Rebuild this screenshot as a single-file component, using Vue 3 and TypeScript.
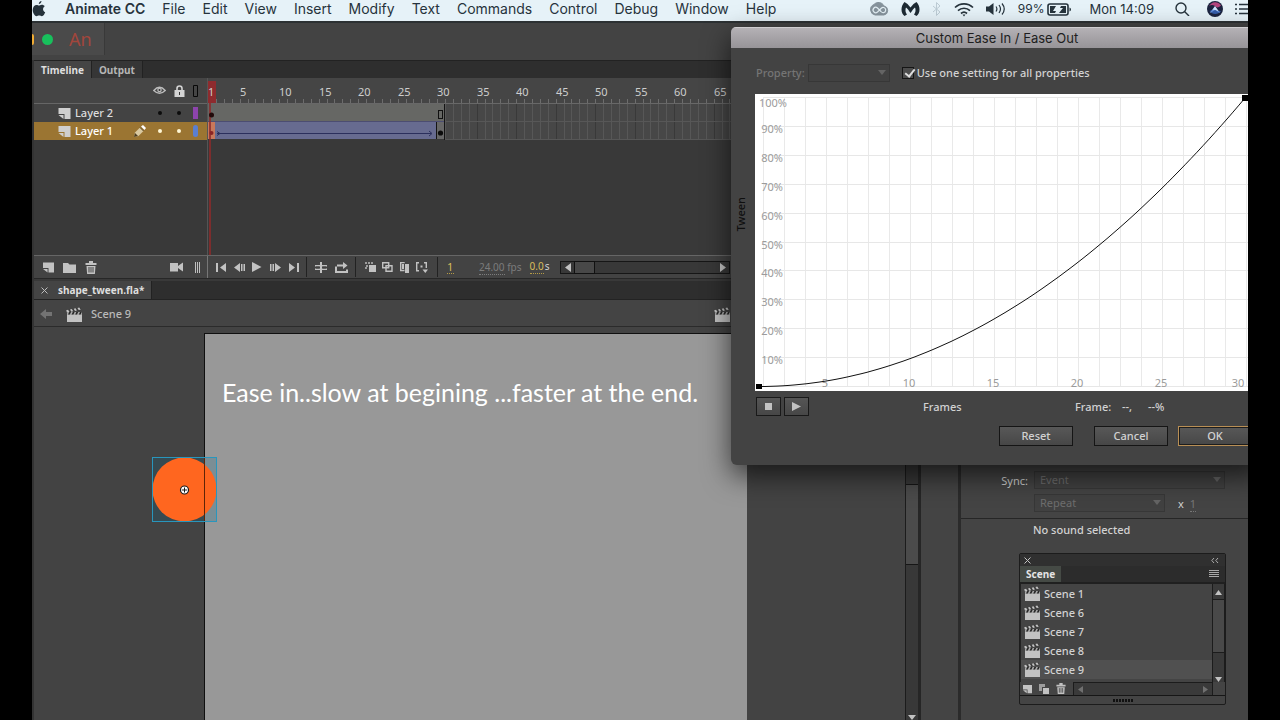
<script setup lang="ts">
import { computed, ref } from 'vue'

interface Layer {
  name: string
  color: string
  active: boolean
}

const menus = ['File', 'Edit', 'View', 'Insert', 'Modify', 'Text', 'Commands', 'Control', 'Debug', 'Window', 'Help']

const layers: Layer[] = [
  { name: 'Layer 2', color: '#8d44ad', active: false },
  { name: 'Layer 1', color: '#5b7fd0', active: true },
]

const scenes = ['Scene 1', 'Scene 6', 'Scene 7', 'Scene 8', 'Scene 9']
const currentScene = ref('Scene 9')
const oneSetting = ref(true)

const framePitch = 7.9
const totalFrames = 90
const lastLabel = 65
const frameX = (n: number) => Math.round((n - 1) * framePitch)
const ticks = computed(() => Array.from({ length: totalFrames }, (_, i) => frameX(i + 1)))
const rulerLabels = computed(() =>
  Array.from({ length: lastLabel / 5 }, (_, i) => (i + 1) * 5).map((n) => ({ n, x: frameX(n) })),
)
const emptyFrames = computed(() =>
  Array.from({ length: totalFrames - 30 }, (_, i) => i + 31).map((n) => ({ n, x: frameX(n) })),
)

const columns = Array.from({ length: 24 }, (_, i) => 8 + i * 21)
const rows = Array.from({ length: 11 }, (_, i) => Math.round(3 + i * 28.9))
const percents = Array.from({ length: 10 }, (_, i) => 100 - i * 10)
const frameMarks = [5, 10, 15, 20, 25, 30].map((n) => ({ n, x: n === 30 ? 483 : 70 + (n / 5 - 1) * 84 }))

// Quadratic ease-in sampled from the first frame to the last
const easeCurve = computed(() =>
  Array.from({ length: 82 }, (_, i) => i / 81)
    .map((t) => `${(4 + 486 * t).toFixed(1)},${(292.5 - 288.5 * t * t).toFixed(1)}`)
    .join(' '),
)
</script>

<template>
  <div class="screen">
    <svg class="defs" width="0" height="0" aria-hidden="true">
      <symbol id="clapper" viewBox="0 0 16 15">
        <path d="M1 8h15v7H1z" />
        <path d="M1 5h15v3H1z" opacity=".8" />
        <path d="M3.200 5h1.800L3.800 7.600H2zM6.800 5h1.800L7.400 7.600H5.600zM10.400 5h1.800L11 7.600H9.200zM14 5h1.800l-1.200 2.600h-1.800z" fill="#262626" />
        <path d="M0 3.200L14.500.2l.6 2.800L.7 5.600z" fill="#3a3a3a" />
        <path d="M.2 3.300l1.900-.5 1.400 2.200-2.600.5zM4 2.500l1.900-.4 1.300 2.200-1.900.4zM7.700 1.700l1.900-.4 1.300 2.200-1.900.4zM11.400.9l1.900-.4 1.500 2.200-2.100.4z" />
      </symbol>
      <symbol id="page" viewBox="0 0 12 11">
        <path d="M0 0h12v11H6V6H0z" />
        <path d="M0 7h5v4z" />
      </symbol>
      <symbol id="trash" viewBox="0 0 12 13">
        <path d="M4 0h4v2h3.500v2H.5V2H4zM1.500 5h9l-.6 8H2.100z" />
        <path d="M4 6v5.500M6 6v5.500M8 6v5.500" stroke="#444" />
      </symbol>
    </svg>

    <div class="desktop">
      <header class="menubar">
        <nav class="menus" aria-label="Application menu">
          <svg class="apple" width="14" height="17" viewBox="0 0 14 17"><path d="M9.500 0c.1 1.500-1.200 3-2.700 3C6.700 1.500 8 .2 9.500 0zM6.900 4.500c.7 0 1.600-.9 3-.8 1 0 2.100.5 2.800 1.500-2.400 1.500-2 5 .5 6-.6 1.700-1.900 4-3.300 4-1 0-1.500-.6-2.700-.6-1.200 0-1.800.6-2.700.6C3 15.200.7 12 .7 9 .7 5.800 2.700 3.900 4.600 3.900c1 0 1.700.6 2.300.6z" /></svg>
          <button class="menu app-name">Animate CC</button>
          <button v-for="m in menus" :key="m" class="menu">{{ m }}</button>
        </nav>
        <div class="status">
          <svg width="20" height="14" viewBox="0 0 20 14" fill="none" stroke="#85929b"><path d="M6 13a5.500 5.500 0 01-1-10.500A6 6 0 0115 4a4.600 4.600 0 010 9z" fill="#85929b" /><path d="M12 9.500L8.500 6A2.600 2.600 0 105 10c1 1 2.500.8 3.500 0l4-4a2.600 2.600 0 112.500 4.500c-1 .4-2.200 0-3-1" stroke="#e2eef3" stroke-width="1.200" /></svg>
          <svg width="19" height="16" viewBox="0 0 19 16" fill="#1d2a33"><path d="M3.500 15C-.5 12-.5 5 3.500 1c2 1 4 2.800 6 5.500 2-2.700 4-4.500 6-5.500 4 4 4 11 0 14l-2.500-1.500c1.500-2 2-4.500 1-7-1.500 1.200-3 3.300-4.500 5.500C8 9.800 6.500 7.700 5 6.500c-1 2.500-.5 5 1 7z" /></svg>
          <svg width="10" height="14" viewBox="0 0 10 14" fill="none" stroke="#bccbd4"><path d="M1 4l7 6-3.500 3.500v-13L8 4l-7 6" /></svg>
          <svg width="20" height="15" viewBox="0 0 20 15" fill="none" stroke="#26333c" stroke-width="1.700"><path d="M1 5.500a13 13 0 0118 0M4 8.700a8.600 8.600 0 0112 0M7 11.500a4.500 4.500 0 016 0" /><path d="M8.500 12.500h3L10 14.500z" fill="#26333c" stroke="none" /></svg>
          <svg width="20" height="14" viewBox="0 0 20 14" fill="none" stroke="#26333c" stroke-width="1.200"><path d="M0 4.500h3L7.500 1v12L3 9.500H0z" fill="#26333c" stroke="none" /><path d="M10 4.500q1.800 2.500 0 5M13 3q3 4 0 8M16 1.500q4.500 5.500 0 11" /></svg>
          <span class="battery">
            99%
            <svg width="30" height="13" viewBox="0 0 30 13"><rect x="1" y="1" width="20" height="11" rx="2" fill="none" stroke="#26333c" stroke-width="1.600" /><path d="M3 3h6L6 8h3l-1 2H3zM19 10h-7l4-5h-3l1-2h5z" fill="#26333c" /><path d="M22.500 4.500v4q1.500-.5 1.500-2t-1.500-2z" fill="#26333c" /></svg>
          </span>
          <span class="clock">Mon 14:09</span>
          <svg width="26" height="14" viewBox="0 0 26 14" fill="none" stroke="#26333c" stroke-width="1.400"><circle cx="12" cy="6" r="5" /><path d="M15.500 9.500L20 14" /></svg>
          <svg width="16" height="16" viewBox="0 0 16 16"><circle cx="8" cy="8" r="8" fill="#1c2440" /><path d="M2 5a7 7 0 0112-.5Q10 8 8 5 5 3 2 5z" fill="#b3457d" /><path d="M3 12l5-7 5 7-5-3z" fill="#cfe6ff" /><path d="M2.500 10Q6 8 8 9t6 1a7 7 0 01-11.500 0z" fill="#3f74d4" opacity=".7" /></svg>
          <svg width="13" height="12" viewBox="0 0 13 12" stroke="#26333c" stroke-width="1.600"><path d="M0 1.500h2M0 6h2M0 10.500h2M4 1.500h9M4 6h9M4 10.500h9" /></svg>
        </div>
      </header>

      <div class="appbar">
        <div class="brand">
          <span class="light amber"></span>
          <span class="light green"></span>
          <span class="logo">An</span>
        </div>
      </div>

      <div class="workspace">
        <main class="editor">
          <div class="tabs">
            <button class="tab selected">Timeline</button>
            <button class="tab">Output</button>
          </div>

          <section class="timeline">
            <div class="layers">
              <div class="layer-head">
                <svg width="13" height="11" viewBox="0 0 13 11"><path d="M.8 5.500Q6.500-1 12.200 5.500 6.500 11 .8 5.500z" fill="none" stroke="#bbb" stroke-width="1.400" /><circle cx="6.500" cy="5" r="2.300" fill="#bbb" /><circle cx="6.500" cy="5" r="1" fill="#333" /></svg>
                <svg width="11" height="12" viewBox="0 0 11 12"><path d="M3 5V3.500a2.500 2.500 0 015 0V5" fill="none" stroke="#d4d4d4" stroke-width="1.600" /><path d="M.5 5h10v7H.5z" fill="#d4d4d4" /><path d="M5 7h1v3H5z" fill="#333" /></svg>
                <svg width="5" height="12" viewBox="0 0 5 12"><path d="M.5.500h4v11h-4z" fill="none" stroke="#080808" /></svg>
              </div>
              <div v-for="l in layers" :key="l.name" class="layer" :class="{ active: l.active }">
                <svg class="layer-icon" width="13" height="11"><use href="#page" /></svg>
                <span class="layer-name">{{ l.name }}</span>
                <svg v-if="l.active" class="pencil" width="12" height="12" viewBox="0 0 12 12"><path d="M0 12l1-4.500 5-5L9.500 6l-5 5z" fill="#d9c8a0" /><path d="M7 1.500L9 0l3 3-1.500 2z" fill="#fff" /><path d="M0 12l1-4 3 3z" fill="#4c3d20" /><path d="M6 2.500L9.500 6" stroke="#5c4b2a" /></svg>
                <i class="dot"></i>
                <i class="dot"></i>
                <i class="swatch" :style="{ background: l.color }"></i>
              </div>
            </div>

            <div class="frames">
              <svg width="720" height="177" viewBox="0 0 720 177">
                <rect width="720" height="25" fill="#454545" />
                <path v-for="x in ticks" :key="x" :d="`M${x + 0.500} 21v4`" stroke="#6d6d6d" />
                <path d="M0 25.500h720" stroke="#686868" />
                <text v-for="l in rulerLabels" :key="l.n" :x="l.x" y="18" class="num">{{ l.n }}</text>
                <rect x="236" y="26" width="484" height="35" fill="#474747" />
                <path v-for="f in emptyFrames" :key="f.n" :d="`M${f.x + 0.500} 26v35`" :stroke="f.n % 5 === 0 ? '#393939' : '#575757'" />
                <path d="M236 43.500h484M236 61.500h484" stroke="#575757" />
                <rect y="26" width="236" height="17" fill="#666764" />
                <path d="M0 43.500h236" stroke="#4c4d72" />
                <rect y="44" width="228" height="17" fill="#676b90" />
                <rect x="229" y="44" width="7" height="17" fill="#686868" />
                <path d="M228.500 44v17M236.500 26v36" stroke="#151515" />
                <path d="M9 55.500h214M9 53.500l3 2-3 2M221 53l3 2.500-3 2.500" fill="none" stroke="#2b2f5c" />
                <rect x="230.500" y="32.500" width="4" height="8" fill="none" stroke="#111" />
                <circle cx="232.500" cy="55" r="2.600" fill="#0c0c0c" />
                <rect y="44" width="7" height="17" fill="#c9785b" />
                <path d="M2 25v152" stroke="#8d2b2b" stroke-width="2" opacity=".8" />
                <rect x="0" y="3" width="8" height="22" fill="#8e2b2e" />
                <text x="0" y="18" class="num">1</text>
                <circle cx="3.500" cy="37" r="2.500" fill="#210909" />
                <circle cx="3.500" cy="55" r="2" fill="#8b2424" />
              </svg>
            </div>
          </section>

          <div class="controls">
            <div class="layer-tools">
              <button class="w21" aria-label="New layer"><svg width="11" height="11"><use href="#page" /></svg></button>
              <button class="w21" aria-label="New folder"><svg width="13" height="11" viewBox="0 0 13 11"><path d="M0 1h5l1.500 1.500H13V11H0z" /></svg></button>
              <button class="w21" aria-label="Delete"><svg width="12" height="13"><use href="#trash" /></svg></button>
              <button class="camera" aria-label="Camera"><svg width="13" height="10" viewBox="0 0 13 10"><path d="M0 1h8v3l2-1.500 3-2v9l-3-2L8 6v3.500H0z" /></svg></button>
              <svg width="7" height="11" viewBox="0 0 7 11" stroke="#c0c0c0"><path d="M1.500 0v11M3.500 0v11M5.500 0v11" /></svg>
            </div>
            <div class="frame-tools">
              <button class="w18" aria-label="First frame"><svg width="11" height="9" viewBox="0 0 11 9"><path d="M0 0h2v9H0zM10 0v9L4 4.500z" /></svg></button>
              <button class="w18" aria-label="Step back"><svg width="11" height="9" viewBox="0 0 11 9"><path d="M6 0v9L0 4.500zM7 1h1.500v7H7zM9.500 1H11v7H9.500z" /></svg></button>
              <button class="w18" aria-label="Play"><svg width="10" height="10" viewBox="0 0 10 10"><path d="M0 0l9.500 5L0 10z" /></svg></button>
              <button class="w18" aria-label="Step forward"><svg width="11" height="9" viewBox="0 0 11 9"><path d="M5 0v9l6-4.500zM0 1h1.500v7H0zM2.500 1H4v7H2.500z" /></svg></button>
              <button class="w18" aria-label="Last frame"><svg width="11" height="9" viewBox="0 0 11 9"><path d="M9 0h2v9H9zM1 0v9l6-4.500z" /></svg></button>
              <i class="sep near"></i>
              <button class="w20" aria-label="Center frame"><svg width="12" height="11" viewBox="0 0 12 11"><path d="M5 0h2v11H5zM0 3h12v1.500H0zM0 6.500h12V8H0z" /><path d="M1 4.500h3.500v2H1zM7.500 4.500H11v2H7.500z" fill="#434343" /></svg></button>
              <button class="w20" aria-label="Loop"><svg width="13" height="11" viewBox="0 0 13 11"><path d="M0 4.500h2V9h9V7.500h2V11H0zM2 2.500h6V0l4.500 3.500L8 7V4.500H2z" /></svg></button>
              <i class="sep"></i>
              <button class="w17" aria-label="Onion skin"><svg width="11" height="10" viewBox="0 0 11 10"><path d="M4 3h7v7H4z" /><path d="M0 0h2v2H0zM3 0h2v2H3zM6 0h2v2H6zM1 3h2v2H1zM0 5h2v2H0z" opacity=".7" /></svg></button>
              <button class="w17" aria-label="Onion skin outlines"><svg class="line" width="11" height="10" viewBox="0 0 11 10"><path d="M.7.700h6v5h-6zM4 3.700h6v5.500H4z" /></svg></button>
              <button class="w17" aria-label="Edit multiple frames"><svg width="9" height="11" viewBox="0 0 9 11"><path d="M5 2h4v9H5z" /><path class="line" d="M4.500 8.500H.7v-8h4" /><path d="M2 2h2v5H2z" /></svg></button>
              <button class="w17" aria-label="Modify markers"><svg width="12" height="11" viewBox="0 0 12 11"><path class="line" d="M3 .7H.7v8H3M8 .7h2.300V6" /><path d="M4.500 3.500h2v2h-2zM6.500 7.500H12l-2.700 3.500z" /></svg></button>
              <i class="sep wide"></i>
              <span class="hot frame-no">1</span>
              <span class="fps"><u>24.00</u> fps</span>
              <span class="secs"><span class="hot">0.0</span><span>s</span></span>
              <div class="hscroll">
                <svg width="6" height="9" viewBox="0 0 6 9"><path d="M6 0v9L0 4.500z" /></svg>
                <i class="hthumb"></i>
                <svg class="push" width="6" height="9" viewBox="0 0 6 9"><path d="M0 0v9l6-4.500z" /></svg>
              </div>
            </div>
          </div>

          <div class="doc-tabs">
            <div class="doc-tab">
              <button aria-label="Close document"><svg width="7" height="7" viewBox="0 0 7 7" stroke="#bdbdbd"><path d="M.5.500l6 6M6.500.500l-6 6" /></svg></button>
              <span>shape_tween.fla*</span>
            </div>
          </div>

          <div class="edit-bar">
            <button aria-label="Back"><svg width="12" height="10" viewBox="0 0 12 10" fill="#737373"><path d="M0 5l6-5v3h6v4H6v3z" /></svg></button>
            <svg class="clap" width="16" height="15"><use href="#clapper" /></svg>
            <span>Scene 9</span>
            <svg class="clap push" width="16" height="15"><use href="#clapper" /></svg>
          </div>

          <div class="canvas-row">
            <div class="pasteboard">
              <div class="stage"><p>Ease in..slow at begining ...faster at the end.</p></div>
              <svg class="ball" width="66" height="66" viewBox="0 0 66 66">
                <rect x=".5" y=".5" width="64" height="64" fill="#0b6b8c" fill-opacity=".2" />
                <circle cx="32.500" cy="32.500" r="32" fill="#ff661f" />
                <path d="M52.500 0v65" stroke="#5e2407" />
                <rect x=".5" y=".5" width="64" height="64" fill="none" stroke="#2896bd" />
                <circle cx="32.500" cy="33" r="4" fill="#fff" stroke="#1b1b1b" stroke-width="1.200" />
                <path d="M30 33h5M32.500 30.500v5" stroke="#1b1b1b" />
              </svg>
            </div>
            <div class="vscroll">
              <i class="vthumb"></i>
              <svg width="8" height="5" viewBox="0 0 8 5"><path d="M0 0h8L4 5z" /></svg>
            </div>
          </div>
        </main>

        <aside class="properties">
          <div class="sound">
            <label for="sync">Sync:</label>
            <span class="pick">
              <select id="sync" disabled><option>Event</option></select>
              <svg width="8" height="5" viewBox="0 0 8 5"><path d="M0 0h8L4 5z" /></svg>
            </span>
            <span class="pick repeat">
              <select aria-label="Repeat mode" disabled><option>Repeat</option></select>
              <svg width="8" height="5" viewBox="0 0 8 5"><path d="M0 0h8L4 5z" /></svg>
            </span>
            <span class="times">x <u>1</u></span>
          </div>
          <p class="no-sound">No sound selected</p>
        </aside>
      </div>

      <section class="scene-panel" aria-label="Scene">
        <div class="panel-top">
          <button aria-label="Close panel"><svg width="7" height="7" viewBox="0 0 7 7" stroke="#c4c4c4"><path d="M.5.500l6 6M6.500.500l-6 6" /></svg></button>
          <button aria-label="Collapse panel"><svg width="8" height="5" viewBox="0 0 8 5" fill="none" stroke="#aaa"><path d="M3 0L.8 2.500 3 5M7 0L4.800 2.500 7 5" /></svg></button>
        </div>
        <div class="panel-tabs">
          <button class="panel-tab">Scene</button>
          <button class="panel-menu" aria-label="Panel menu"><svg width="10" height="8" viewBox="0 0 10 8" stroke="#a9a9a9"><path d="M0 .5h10M0 2.500h10M0 4.500h10M0 6.500h10" /></svg></button>
        </div>
        <div class="panel-body">
          <ul>
            <li v-for="s in scenes" :key="s" :class="{ current: s === currentScene }">
              <svg class="clap" width="16" height="15"><use href="#clapper" /></svg>{{ s }}
            </li>
          </ul>
          <div class="mini-scroll">
            <svg width="7" height="5" viewBox="0 0 7 5"><path d="M0 5h7L3.500 0z" /></svg>
            <i></i>
            <svg class="down" width="7" height="5" viewBox="0 0 7 5"><path d="M0 0h7L3.500 5z" /></svg>
          </div>
        </div>
        <div class="panel-tools">
          <button aria-label="Add scene"><svg width="9" height="10"><use href="#page" /></svg></button>
          <button aria-label="Duplicate scene"><svg width="10" height="10" viewBox="0 0 10 10"><path d="M0 0h6v3H3v4H0z" opacity=".7" /><path d="M4 4h6v6H4z" /></svg></button>
          <button aria-label="Delete scene"><svg width="10" height="11"><use href="#trash" /></svg></button>
          <div class="mini-h">
            <svg width="5" height="7" viewBox="0 0 5 7"><path d="M5 0v7L0 3.500z" /></svg>
            <svg width="5" height="7" viewBox="0 0 5 7"><path d="M0 0v7l5-3.500z" /></svg>
          </div>
        </div>
        <div class="grip"><i></i></div>
      </section>

      <section class="dialog" role="dialog" aria-labelledby="dialog-title">
        <h1 id="dialog-title">Custom Ease In / Ease Out</h1>
        <div class="dialog-body">
          <div class="settings">
            <label class="dim" for="property">Property:</label>
            <span class="pick property">
              <select id="property" disabled></select>
              <svg width="8" height="5" viewBox="0 0 8 5"><path d="M0 0h8L4 5z" /></svg>
            </span>
            <input id="one-setting" v-model="oneSetting" type="checkbox" />
            <label for="one-setting">Use one setting for all properties</label>
          </div>

          <div class="chart-row">
            <span class="axis">Tween</span>
            <svg class="chart" width="497" height="297" viewBox="0 0 497 297">
              <rect width="497" height="297" fill="#fff" />
              <path v-for="x in columns" :key="'c' + x" :d="`M${x + 0.500} 3v290`" stroke="#e9e9e9" />
              <path v-for="y in rows" :key="'r' + y" :d="`M8 ${y + 0.500}h489`" stroke="#e7e7e7" />
              <text v-for="(p, i) in percents" :key="p" :x="i === 0 ? 32 : 28" :y="rows[i] + (i === 0 ? 10 : 7)" class="mark" text-anchor="end">{{ p }}%</text>
              <text v-for="f in frameMarks" :key="f.n" :x="f.x" y="293" class="mark" text-anchor="middle">{{ f.n }}</text>
              <polyline :points="easeCurve" fill="none" stroke="#111" />
              <rect x="1" y="290" width="6" height="5" />
              <rect x="487" y="1" width="6" height="6" />
            </svg>
          </div>

          <div class="playback">
            <button class="square" aria-label="Stop"><svg width="7" height="7" viewBox="0 0 7 7"><path d="M0 0h7v7H0z" /></svg></button>
            <button class="square" aria-label="Preview"><svg width="9" height="9" viewBox="0 0 9 9"><path d="M0 0l9 4.500L0 9z" /></svg></button>
            <span class="frames-label">Frames</span>
            <span class="frame-label">Frame:</span>
            <span class="value">--,</span>
            <span class="value">--%</span>
          </div>

          <div class="actions">
            <button class="action">Reset</button>
            <button class="action">Cancel</button>
            <button class="action primary">OK</button>
          </div>
        </div>
      </section>
    </div>
  </div>
</template>

<style>
body {
  background: #000;
}
</style>

<style scoped>
* {
  box-sizing: border-box;
}
.screen {
  min-height: 100vh;
  display: flex;
  padding: 0 32px;
  background: #000;
  color: #d2d2d2;
  font: 11px/16px 'Noto Sans', 'Open Sans', sans-serif;
}
.defs {
  position: absolute;
}
svg {
  display: block;
  flex: none;
}
button {
  display: flex;
  align-items: center;
  justify-content: center;
  padding: 0;
  border: 0;
  background: none;
  color: inherit;
  font: inherit;
}
i {
  display: block;
}
u {
  text-decoration: none;
  border-bottom: 1px dotted currentColor;
}
.push {
  margin-left: auto;
}
.desktop {
  position: relative;
  flex: 1;
  min-width: 0;
  display: flex;
  flex-direction: column;
  overflow: hidden;
  background: #444;
}

/* System menu bar */
.menubar {
  height: 21px;
  display: flex;
  align-items: center;
  justify-content: space-between;
  padding-bottom: 3px;
  background: #e6f2f8;
  color: #26333c;
  font: 14px/18px Inter, 'Liberation Sans', sans-serif;
  white-space: nowrap;
}
.menus,
.status {
  display: flex;
  align-items: center;
}
.menus {
  gap: 17px;
}
.status {
  gap: 12px;
}
.apple {
  fill: #26333c;
}
.app-name {
  margin-left: 2px;
  font-weight: 600;
}
.battery {
  display: flex;
  align-items: center;
  gap: 3px;
  font-size: 12px;
}
.clock {
  padding-right: 3px;
  font-size: 13px;
}

/* Application bar */
.appbar {
  height: 39px;
  border-top: 2px solid #2c3133;
  background: #434343;
}
.brand {
  display: flex;
  align-items: center;
  width: 73px;
  height: 32px;
  border-right: 1px solid #393939;
  background: #4a4a4a;
}
.light {
  width: 11px;
  height: 11px;
  border-radius: 50%;
}
.amber {
  width: 2px;
  border-radius: 0 6px 6px 0;
  background: #f0ac35;
}
.green {
  margin-left: 8px;
  background: #18c05c;
}
.logo {
  margin-left: 16px;
  color: #a2463c;
  font-size: 18px;
  line-height: 22px;
}

/* Workspace */
.workspace {
  flex: 1;
  display: flex;
}
.editor {
  flex: 1;
  min-width: 0;
  display: flex;
  flex-direction: column;
  border-left: 2px solid #333;
  border-right: 3px solid #262626;
}
.tabs {
  height: 18px;
  display: flex;
  border-top: 1px solid #222;
  background: #2e2e2e;
}
.tab {
  padding: 0 7px;
  border-right: 1px solid #222;
  background: #363636;
  color: #b5b5b5;
  font-size: 10px;
  font-weight: 700;
}
.tab.selected {
  background: #454545;
  color: #dedede;
}
.timeline {
  display: flex;
  height: 177px;
  background: #393939;
}
.layers {
  width: 174px;
  border-right: 1px solid #555;
  flex: none;
}
.layer-head {
  height: 26px;
  display: flex;
  align-items: center;
  justify-content: flex-end;
  gap: 8px;
  padding-right: 9px;
  border-bottom: 1px solid #666;
  background: #454545;
}
.layer {
  height: 18px;
  display: flex;
  align-items: center;
  padding: 0 9px 0 24px;
  background: #434343;
  color: #dcdcdc;
  font-weight: 500;
}
.layer.active {
  background: #9b7532;
  color: #fff;
}
.layer-icon {
  fill: #cfcfcf;
}
.layer-name {
  flex: 1;
  margin-left: 4px;
}
.pencil {
  margin-right: 12px;
}
.dot {
  width: 4px;
  height: 4px;
  margin-right: 15px;
  border-radius: 50%;
  background: #0c0c0c;
}
.active .dot {
  background: #fff7d6;
}
.dot + .dot {
  margin-right: 12px;
}
.swatch {
  width: 5px;
  height: 12px;
}
.active .swatch {
  border-radius: 3px;
}
.frames {
  flex: 1;
  min-width: 0;
  overflow: hidden;
}
.num {
  fill: #cdcdcd;
  font-size: 11px;
}
.controls {
  display: flex;
  height: 24px;
  border-top: 1px solid #666;
  border-bottom: 1px solid #272727;
  background: #434343;
}
.controls svg,
.mini-scroll svg,
.panel-tools svg,
.playback svg,
.vscroll svg {
  fill: #c2c2c2;
}
.line,
.controls svg.line {
  fill: none;
  stroke: #c2c2c2;
  stroke-width: 1.4px;
}
.layer-tools,
.frame-tools {
  display: flex;
  align-items: center;
}
.layer-tools {
  width: 174px;
  flex: none;
  padding: 0 6px 0 4px;
  border-right: 1px solid #777;
}
.w21 {
  width: 21px;
}
.w20 {
  width: 20px;
}
.w18 {
  width: 18px;
}
.w17 {
  width: 17px;
}
.camera {
  margin-left: auto;
  margin-right: 11px;
}
.frame-tools {
  flex: 1;
  min-width: 0;
  padding: 0 188px 0 4px;
}
.sep {
  width: 1px;
  height: 20px;
  margin: 0 6px 0 4px;
  background: #222;
}
.sep.near {
  margin-right: 4px;
}
.sep.wide {
  margin: 0 9px 0 7px;
}
.hot {
  border-bottom: 1px dotted #b59b45;
  color: #d9bc5a;
  line-height: 13px;
}
.frame-no {
  width: 7px;
}
.fps {
  margin-left: 25px;
  color: #7c7c7c;
  font-size: 10px;
  line-height: 13px;
  white-space: nowrap;
}
.secs {
  display: flex;
  gap: 1px;
  margin-left: 8px;
  font-size: 10px;
  line-height: 13px;
}
.hscroll {
  flex: 1;
  display: flex;
  align-items: center;
  height: 13px;
  margin-left: 11px;
  padding: 0 3px 0 4px;
  border: 1px solid #161616;
  background: #383838;
}
.hthumb {
  width: 21px;
  height: 13px;
  margin-left: 3px;
  border: 1px solid #111;
  background: #484848;
}
.doc-tabs {
  height: 21px;
  display: flex;
  border-top: 2px solid #393939;
  border-bottom: 1px solid #232323;
  background: #2e2e2e;
}
.doc-tab {
  display: flex;
  align-items: center;
  gap: 10px;
  padding: 0 7px;
  border-right: 1px solid #222;
  background: #444;
  color: #dedede;
  font-size: 10px;
  font-weight: 700;
}
.edit-bar {
  height: 27px;
  display: flex;
  align-items: center;
  padding: 2px 188px 0 6px;
  border-bottom: 1px solid #2b2b2b;
  color: #bababa;
  font-weight: 500;
}
.clap {
  margin: 0 9px 0 14px;
  fill: #c2c2c2;
}
.clap.push {
  margin: 0 0 0 auto;
}
.canvas-row {
  flex: 1;
  display: flex;
}
.pasteboard {
  position: relative;
  flex: 1;
  display: flex;
  padding: 6px 158px 0 170px;
  background: #434343;
}
.stage {
  flex: 1;
  padding: 40px 0 0 17px;
  border: solid #101010;
  border-width: 1px 0 0 1px;
  background: #989898;
}
.stage p {
  margin: 0;
  color: #fff;
  font: 25px/36px Lato, 'Open Sans', sans-serif;
  white-space: nowrap;
}
.ball {
  position: absolute;
  left: 118px;
  top: 130px;
}
.vscroll {
  width: 13px;
  display: flex;
  flex-direction: column;
  align-items: center;
  justify-content: space-between;
  padding-top: 157px;
  border-left: 1px solid #1c1c1c;
  background: #383838;
}
.vthumb {
  width: 12px;
  height: 81px;
  border: solid #161616;
  border-width: 1px 0;
  background: #4b4b4b;
}

/* Properties dock */
.properties {
  width: 290px;
  flex: none;
  margin-left: 37px;
  padding-top: 411px;
  border-left: 3px solid #2b2b2b;
}
.sound {
  display: grid;
  grid-template-columns: 67px 131px 60px;
  column-gap: 6px;
  row-gap: 4px;
  align-items: center;
  padding-bottom: 6px;
  border-bottom: 1px solid #262626;
}
.sound label {
  padding-top: 2px;
  text-align: right;
}
.sound > .pick {
  grid-column: 2 / 4;
}
.sound > .repeat {
  grid-column: 2;
}
.times {
  padding: 3px 0 0 7px;
}
.times u {
  margin-left: 3px;
  color: #777;
}
.pick {
  position: relative;
  display: flex;
  height: 18px;
}
.sound > .pick:not(.repeat) {
  margin-right: 6px;
}
.pick select {
  appearance: none;
  width: 100%;
  padding: 0 5px;
  border: 1px solid #373737;
  border-radius: 0;
  background: #414141;
  color: #6e6e6e;
  opacity: 1;
  font: inherit;
  line-height: 14px;
}
.pick svg {
  position: absolute;
  right: 4px;
  top: 6px;
  fill: #646464;
}
.no-sound {
  margin: 3px 0 0 72px;
  font-weight: 500;
}

/* Floating scene panel */
.scene-panel {
  position: absolute;
  right: 22px;
  top: 553px;
  width: 207px;
  border: 1px solid #1c1c1c;
  border-radius: 2px;
  background: #444;
}
.panel-top {
  height: 12px;
  display: flex;
  align-items: center;
  justify-content: space-between;
  padding: 0 6px 0 4px;
  background: #303030;
}
.panel-tabs {
  height: 18px;
  display: flex;
  justify-content: space-between;
  border-bottom: 2px solid #202020;
  background: #2c2c2c;
}
.panel-tab {
  padding: 0 6px;
  background: #454a45;
  color: #e4e4e4;
  font-size: 10px;
  font-weight: 700;
}
.panel-menu {
  padding-right: 6px;
}
.panel-body {
  height: 98px;
  display: flex;
  border-left: 1px solid #222;
}
.panel-body ul {
  flex: 1;
  margin: 0;
  padding: 0;
  list-style: none;
}
.panel-body li {
  height: 19px;
  display: flex;
  align-items: center;
  font-weight: 500;
}
.panel-body .clap {
  margin: 0 4px 0 3px;
}
.current {
  background: #505050;
}
.mini-scroll {
  width: 13px;
  display: flex;
  flex-direction: column;
  align-items: center;
  padding-top: 6px;
  border: solid #1c1c1c;
  border-width: 0 1px;
  background: #3a3a3a;
}
.mini-scroll i {
  width: 11px;
  height: 54px;
  margin-top: 4px;
  border: solid #1c1c1c;
  border-width: 1px 0;
  background: #494949;
}
.mini-scroll .down {
  margin-top: auto;
}
.panel-tools {
  height: 14px;
  display: flex;
  align-items: center;
  gap: 7px;
  padding-left: 3px;
  border-bottom: 1px solid #161616;
}
.mini-h {
  flex: 1;
  height: 13px;
  display: flex;
  align-items: center;
  justify-content: space-between;
  margin-right: 12px;
  padding: 0 4px;
  border: solid #1c1c1c;
  border-width: 1px 1px 0;
  background: #3a3a3a;
}
.panel-tools .mini-h svg {
  fill: #707070;
}
.grip {
  height: 8px;
  display: flex;
  align-items: center;
  justify-content: center;
}
.grip i {
  width: 20px;
  height: 3px;
  background: repeating-linear-gradient(90deg, #111 0 2px, #444 2px 3px);
}

/* Easing dialog */
.dialog {
  position: absolute;
  left: 699px;
  right: -15px;
  top: 27px;
  border-radius: 5px 5px 6px 6px;
  overflow: hidden;
  background: #434343;
  box-shadow: 0 10px 28px rgba(0, 0, 0, 0.65);
}
.dialog h1 {
  height: 21px;
  margin: 0;
  border-top: 1px solid #cfcdd0;
  background: linear-gradient(#b4b1b5, #979498);
  color: #1e1e1e;
  font: 13px/20px Inter, 'Liberation Sans', sans-serif;
  text-align: center;
}
.dialog-body {
  height: 417px;
  padding: 16px 11px 0 4px;
  font-weight: 500;
}
.settings {
  display: flex;
  align-items: center;
  height: 18px;
  padding-left: 21px;
}
.dim {
  color: #757575;
}
.property {
  width: 82px;
  margin: 0 12px 0 3px;
}
.settings input {
  appearance: none;
  width: 12px;
  height: 12px;
  margin: 0 3px 0 0;
  border: 1px solid #151515;
  background: #4c4c4c;
}
.settings input:checked::after {
  content: '';
  display: block;
  width: 4px;
  height: 8px;
  margin: -1px 0 0 4px;
  border: solid #ddd;
  border-width: 0 2px 2px 0;
  transform: rotate(38deg);
}
.chart-row {
  display: flex;
  align-items: center;
  margin-top: 12px;
}
.axis {
  width: 20px;
  margin-bottom: 56px;
  color: #0f0f0f;
  line-height: 12px;
  writing-mode: vertical-rl;
  transform: rotate(180deg);
}
.chart {
  overflow: hidden;
}
.mark {
  fill: #9b9b9b;
  font-size: 11px;
  font-weight: 400;
}
.playback {
  display: grid;
  grid-template-columns: 25px 25px 108px 149px 44px 23px 40px;
  align-items: center;
  height: 19px;
  margin: 6px 0 0 21px;
  column-gap: 3px;
}
.square {
  height: 19px;
  border: 1px solid #191919;
  background: linear-gradient(#555, #474747);
}
.frames-label {
  grid-column: 4;
}
.actions {
  display: flex;
  justify-content: flex-end;
  gap: 21px;
  margin-top: 10px;
}
.action {
  width: 74px;
  height: 20px;
  border: 1px solid #151515;
  background: linear-gradient(#585858, #474747);
}
.primary {
  margin-left: -11px;
  border: 1px solid #b98f55;
  box-shadow: inset 0 0 0 1px #1d1d1d;
}
</style>
